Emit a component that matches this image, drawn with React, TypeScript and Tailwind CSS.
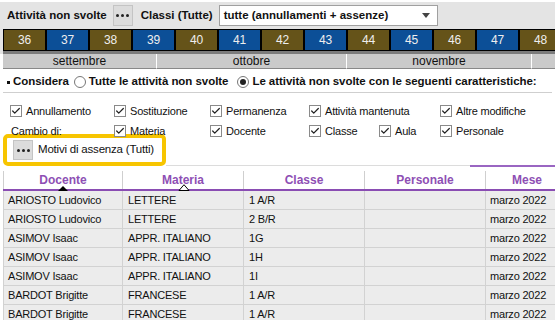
import { Check } from 'lucide-react';

const WEEKS = [36, 37, 38, 39, 40, 41, 42, 43, 44, 45, 46, 47, 48];

const MONTHS = [
  { name: 'settembre', w: 'w-[154px]' },
  { name: 'ottobre', w: 'w-[190px]' },
  { name: 'novembre', w: 'w-[185px]' },
  { name: '', w: 'w-[40px]' },
];

const ROWS = [
  ['ARIOSTO Ludovico', 'LETTERE', '1 A/R'],
  ['ARIOSTO Ludovico', 'LETTERE', '2 B/R'],
  ['ASIMOV Isaac', 'APPR. ITALIANO', '1G'],
  ['ASIMOV Isaac', 'APPR. ITALIANO', '1H'],
  ['ASIMOV Isaac', 'APPR. ITALIANO', '1I'],
  ['BARDOT Brigitte', 'FRANCESE', '1 A/R'],
  ['BARDOT Brigitte', 'FRANCESE', '1 A/R'],
];

function Dots({ className }: { className: string }) {
  return (
    <div className={`flex items-center justify-center gap-[2px] border border-[#c4c4c4] bg-[#dcdcdc] ${className}`}>
      <span className="h-[3px] w-[3px] rounded-full bg-[#222]" />
      <span className="h-[3px] w-[3px] rounded-full bg-[#222]" />
      <span className="h-[3px] w-[3px] rounded-full bg-[#222]" />
    </div>
  );
}

function Box({ label, className = '' }: { label: string; className?: string }) {
  return (
    <div className={`flex items-center gap-[4px] whitespace-nowrap ${className}`}>
      <span className="flex h-[12px] w-[12px] items-center justify-center border border-[#8a8a8a] bg-white">
        <Check size={10} strokeWidth={3} className="text-[#222]" />
      </span>
      <span>{label}</span>
    </div>
  );
}

function Radio({ on }: { on?: boolean }) {
  return (
    <span className="flex h-[12px] w-[12px] shrink-0 items-center justify-center rounded-full border border-[#777] bg-white">
      {on && <span className="h-[6px] w-[6px] rounded-full bg-[#222]" />}
    </span>
  );
}

export default function App() {
  return (
    <div className="h-[320px] w-[555px] overflow-hidden bg-white font-['Liberation_Sans',Arial,sans-serif] text-[11px] tracking-[-0.2px] text-[#111]">
      {/* toolbar */}
      <div className="bg-[#e4e4e4] border-t-2 border-white">
        <div className="flex h-[27px] items-center pl-[7px] text-[11.5px] font-bold tracking-normal">
          <span>Attività non svolte</span>
          <Dots className="ml-[6px] h-[21px] w-[20px]" />
          <span className="ml-[8px]">Classi (Tutte)</span>
          <div className="ml-[6px] flex h-[21px] w-[219px] items-center justify-between border border-[#a0a0a0] bg-white pl-[4px] pr-[7px]">
            <span>tutte (annullamenti + assenze)</span>
            <span className="h-0 w-0 border-x-[4px] border-t-[5px] border-x-transparent border-t-[#444]" />
          </div>
        </div>
        {/* week strip */}
        <div className="pl-[3px]">
          <div className="flex h-[22px] bg-black">
            {WEEKS.map((w, i) => (
              <div
                key={w}
                className={`flex h-full w-[43px] shrink-0 items-center justify-center border border-black text-[12px] text-[#eee] ${i % 2 === 0 ? 'bg-[#655319]' : 'bg-[#0c4f97]'}`}
              >
                {w}
              </div>
            ))}
          </div>
          <div className="h-[3px] bg-[#7c7c7c]" />
        </div>
      </div>
      <div className="flex h-[15px] pl-[3px] text-[12px] tracking-normal">
        {MONTHS.map((m, i) => (
          <div key={i} className={`${m.w} shrink-0 border-b border-r border-[#888] border-r-white bg-[#cacaca] text-center leading-[14px]`}>
            {m.name}
          </div>
        ))}
      </div>

      {/* considera */}
      <div className="mx-[3px] mt-[3px] flex h-[21px] items-center gap-[3px] whitespace-nowrap border-b border-[#cfcfcf] pb-[1px] pl-[4px] text-[11.5px] font-bold tracking-[-0.05px]">
        <span className="mb-[-2px] h-[3px] w-[3px] bg-[#111]" />
        <span className="mr-[2px]">Considera</span>
        <Radio />
        <span className="mr-[6px]">Tutte le attività non svolte</span>
        <Radio on />
        <span>Le attività non svolte con le seguenti caratteristiche:</span>
      </div>

      {/* checkboxes */}
      <div className="relative mt-[10px] h-[16px]">
        <Box label="Annullamento" className="absolute left-[10px] top-0" />
        <Box label="Sostituzione" className="absolute left-[114px] top-0" />
        <Box label="Permanenza" className="absolute left-[210px] top-0" />
        <Box label="Attività mantenuta" className="absolute left-[309px] top-0" />
        <Box label="Altre modifiche" className="absolute left-[440px] top-0" />
      </div>
      <div className="relative mt-[4px] h-[16px]">
        <span className="absolute left-[11px] top-0">Cambio di:</span>
        <Box label="Materia" className="absolute left-[114px] top-0" />
        <Box label="Docente" className="absolute left-[210px] top-0" />
        <Box label="Classe" className="absolute left-[309px] top-0" />
        <Box label="Aula" className="absolute left-[379px] top-0" />
        <Box label="Personale" className="absolute left-[440px] top-0" />
      </div>

      {/* motivi (highlighted) */}
      <div className="flex items-end">
        <div className="ml-[3px] mt-[-5px] flex h-[32px] w-[163px] items-center gap-[5px] rounded-[5px] border-[4px] border-[#f7c500] pl-[6px]">
          <Dots className="h-[20px] w-[20px]" />
          <span className="text-[11.5px]">Motivi di assenza (Tutti)</span>
        </div>
        <div className="mb-[-1px] flex flex-1">
          <div className="h-px flex-1 bg-[#dcdcdc]" />
          <div className="h-[2px] w-[85px] bg-[#9a66c2]" />
        </div>
      </div>

      {/* table */}
      <div className="ml-[3px] mt-[5px] w-[620px]">
        <div className="relative flex h-[20px] border-b-[2px] border-[#8a4db3] text-[12px] font-bold tracking-normal text-[#8e4fb4]">
          {['Docente', 'Materia', 'Classe', 'Personale', 'Mese'].map((h, i) => (
            <div
              key={h}
              className={`flex items-center justify-center border-l border-[#cfcfcf] ${i === 4 ? 'w-[130px] justify-start pl-[26px]' : i === 0 ? 'w-[119px]' : 'w-[121px]'}`}
            >
              {h}
            </div>
          ))}
          <span className="absolute bottom-[-2px] left-[55px] h-0 w-0 border-x-[5px] border-b-[5px] border-x-transparent border-b-black" />
          <svg className="absolute bottom-[-2px] left-[175px]" width="12" height="7" viewBox="0 0 12 7">
            <path d="M6 0.7 L11 6.5 L1 6.5 Z" fill="white" stroke="black" strokeWidth="1" />
          </svg>
        </div>
        {ROWS.map((r, i) => (
          <div key={i} className="flex h-[19px] border-b border-[#d2d2d2] bg-[#ececec]">
            <div className="flex w-[119px] items-center border-l border-[#d2d2d2] pl-[4px]">{r[0]}</div>
            <div className="flex w-[121px] items-center border-l border-[#d2d2d2] pl-[5px]">{r[1]}</div>
            <div className="flex w-[121px] items-center border-l border-[#d2d2d2] pl-[5px]">{r[2]}</div>
            <div className="flex w-[121px] items-center border-l border-[#d2d2d2]" />
            <div className="flex w-[130px] items-center border-l border-[#d2d2d2] pl-[4px]">marzo 2022</div>
          </div>
        ))}
      </div>
    </div>
  );
}
